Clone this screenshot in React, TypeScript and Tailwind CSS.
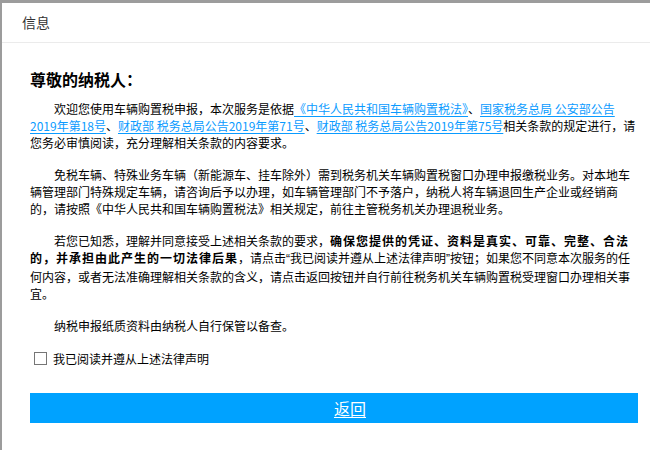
import React from "react";

const font = { fontFamily: '"Noto Sans CJK SC", "Noto Sans", sans-serif' };
const latin = { fontFamily: '"Liberation Sans", sans-serif' };

function L({ children }: { children: React.ReactNode }) {
  return <a className="text-[#0a9bff] underline underline-offset-2">{children}</a>;
}

export default function App() {
  return (
    <div className="w-[650px] h-[450px] bg-[#9c9c9c] overflow-hidden" style={font}>
      <div className="ml-[2px] mt-[3px] h-[447px] bg-white flex flex-col">
        <div className="h-[40px] border-b border-[#ebebeb] flex items-center pl-[20px] text-[14px] text-[#333]">
          信息
        </div>
        <div className="pl-[28px] w-[636px] flex flex-col">
          <div className="mt-[25px] text-[16px] font-bold text-black leading-[22px]">尊敬的纳税人：</div>
          <div className="mt-[10px] w-[608px] text-[12px] leading-[17px] text-black flex flex-col gap-[15px]">
            <p className="indent-[24px]">
              欢迎您使用车辆购置税申报，本次服务是依据<L>《中华人民共和国车辆购置税法》</L>、<L>国家税务总局 公安部公告2019年第18号</L>、<L>财政部 税务总局公告2019年第71号</L>、<L>财政部 税务总局公告2019年第75号</L>相关条款的规定进行，请您务必审慎阅读，充分理解相关条款的内容要求。
            </p>
            <p className="indent-[24px]">
              免税车辆、特殊业务车辆（新能源车、挂车除外）需到税务机关车辆购置税窗口办理申报缴税业务。对本地车辆管理部门特殊规定车辆，请咨询后予以办理，如车辆管理部门不予落户，纳税人将车辆退回生产企业或经销商的，请按照《中华人民共和国车辆购置税法》相关规定，前往主管税务机关办理退税业务。
            </p>
            <p className="indent-[24px]">
              若您已知悉，理解并同意接受上述相关条款的要求，<b className="font-bold tracking-[1px]">确保您提供的凭证、资料是真实、可靠、完整、合法的，并承担由此产生的一切法律后果</b>，请点击<span style={latin}>“</span>我已阅读并遵从上述法律声明<span style={latin}>”</span>按钮；如果您不同意本次服务的任何内容，或者无法准确理解相关条款的含义，请点击返回按钮并自行前往税务机关车辆购置税受理窗口办理相关事宜。
            </p>
            <p className="indent-[24px]">纳税申报纸质资料由纳税人自行保管以备查。</p>
          </div>
          <label className="mt-[16px] ml-[4px] flex items-center gap-[6px] text-[12px] text-black leading-[17px]">
            <span className="w-[13px] h-[13px] border border-[#767676] bg-white inline-block" />
            我已阅读并遵从上述法律声明
          </label>
          <button className="mt-[26px] w-[608px] h-[30px] bg-[#00a2ff] flex items-center justify-center pl-[32px] text-white text-[16px] underline underline-offset-2">
            返回
          </button>
        </div>
      </div>
    </div>
  );
}
